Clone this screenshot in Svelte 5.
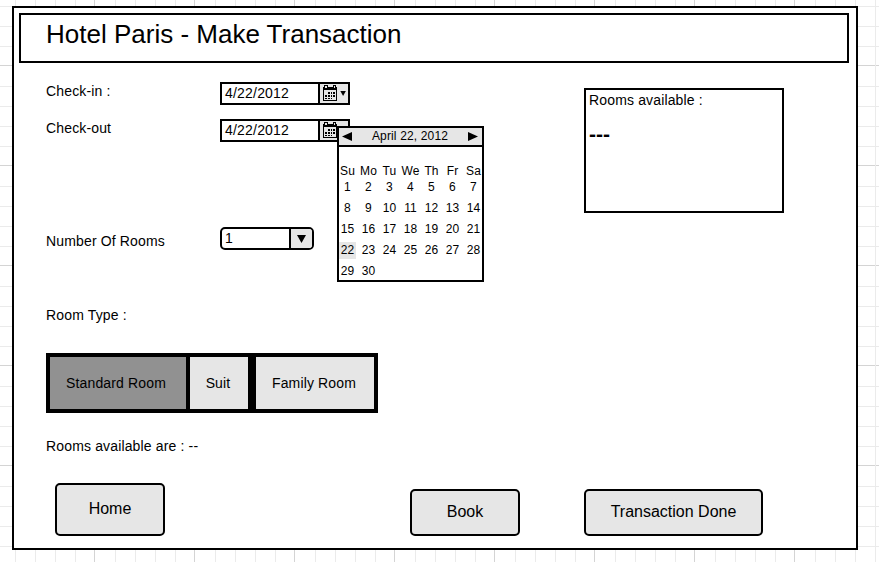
<script>
  const weekdays = ['Su', 'Mo', 'Tu', 'We', 'Th', 'Fr', 'Sa'];
  const days = Array.from({ length: 30 }, (_, i) => i + 1);
  const selectedDay = 22;
</script>

{#snippet dateField()}
  <div class="date">
    <span class="value">4/22/2012</span>
    <span class="picker">
      <svg width="28" height="19" viewBox="0 0 28 19" shape-rendering="crispEdges">
        <path d="M3 3h14v14H3z" fill="#000" />
        <path d="M4 6h12v10H4z" fill="#e6e6e6" />
        <path d="M4 1h4v4H4zM13 1h3v4h-3z" fill="#000" />
        <path d="M5 2h2v2H5zM14 2h1v2h-1z" fill="#e6e6e6" />
        <path d="M8 8h2v2H8zM11 8h1v2h-1zM13 8h2v2h-2zM5 11h2v2H5zM8 11h2v2H8zM11 11h1v2h-1zM13 11h2v2h-2zM5 14h2v1H5zM8 14h2v1H8zM11 14h1v1h-1z" fill="#000" />
        <path d="M20.3 7h5.6l-2.8 5z" fill="#000" shape-rendering="auto" />
      </svg>
    </span>
  </div>
{/snippet}

<main class="canvas">
  <div class="frame">
    <header><h1>Hotel Paris - Make Transaction</h1></header>
    <div class="content">
      <div class="form">
        <div class="row in"><span class="label">Check-in :</span>{@render dateField()}</div>
        <div class="row out">
          <span class="label">Check-out</span>
          <div class="anchor">
            {@render dateField()}
            <div class="calendar">
              <div class="month">
                <svg width="10" height="9"><path d="M10 0v9L0 4.5z" /></svg>
                <span>April 22, 2012</span>
                <svg width="10" height="9"><path d="M0 0v9l10-4.5z" /></svg>
              </div>
              <div class="week">
                {#each weekdays as w}<span>{w}</span>{/each}
              </div>
              <div class="days">
                {#each days as d}<span class:selected={d === selectedDay}>{d}</span>{/each}
              </div>
            </div>
          </div>
        </div>
        <div class="row number">
          <span class="label">Number Of Rooms</span>
          <div class="select">
            <span class="value">1</span>
            <span class="arrow"><svg width="9" height="8"><path d="M0 0h9L4.5 8z" /></svg></span>
          </div>
        </div>
        <p class="type">Room Type :</p>
        <div class="segments">
          <button class="std">Standard Room</button>
          <button class="suit">Suit</button>
          <button class="family">Family Room</button>
        </div>
        <p class="count">Rooms available are : --</p>
      </div>
      <aside>
        <p>Rooms available :</p>
        <strong>---</strong>
      </aside>
    </div>
    <footer>
      <button class="home">Home</button>
      <button class="book">Book</button>
      <button class="done">Transaction Done</button>
    </footer>
  </div>
</main>

<style>
  :global(body) { background: #fff; }
  * { box-sizing: border-box; }
  .canvas {
    --grid: #d4d4d4 0 1px, transparent 1px 21px, #ebebeb 21px 22px, transparent 22px 41px,
      #ebebeb 41px 42px, transparent 42px 61px, #ebebeb 61px 62px, transparent 62px 81px,
      #ebebeb 81px 82px, transparent 82px;
    width: 879px;
    height: 562px;
    padding: 6px 0 0 12px;
    overflow: hidden;
    font: 14px/16px "Liberation Sans", Arial, sans-serif;
    letter-spacing: .15px;
    color: #000;
    background-color: #fff;
    background-image: linear-gradient(90deg, var(--grid)), linear-gradient(var(--grid));
    background-size: 100px 100px;
    background-position: -6px 0, 0 -35px;
  }
  .frame {
    width: 846px;
    height: 544px;
    border: 2px solid #000;
    background: #fff;
    padding: 5px 7px 0 5px;
  }
  header {
    height: 50px;
    border: 2px solid #000;
    padding: 4px 0 0 25px;
  }
  h1 {
    margin: 0;
    font-size: 26px;
    line-height: 30px;
    font-weight: 400;
    letter-spacing: 0;
    white-space: nowrap;
  }
  p { margin: 0; }
  .content { display: flex; justify-content: space-between; padding: 19px 65px 0 27px; }
  .form { width: 440px; }
  .row { display: flex; height: 23px; }
  .label { width: 174px; padding-top: 1px; }
  .row.out { margin-top: 14px; }
  .row.number { margin-top: 85px; }
  .number .label { padding-top: 6px; }
  .anchor { position: relative; }
  .date { display: flex; width: 130px; height: 23px; border: 2px solid #000; }
  .date .value { width: 96px; padding: 1px 0 0 3px; letter-spacing: .2px; }
  .picker { width: 30px; border-left: 2px solid #000; background: #e6e6e6; }
  svg { display: block; }
  .calendar {
    position: absolute;
    left: 117px;
    top: 7px;
    width: 147px;
    height: 156px;
    border: 2px solid #000;
    background: #fff;
    font-size: 12px;
    line-height: 17px;
    letter-spacing: .1px;
  }
  .month {
    display: flex;
    justify-content: space-between;
    align-items: center;
    height: 19px;
    padding: 0 4px 0 3px;
    border-bottom: 2px solid #000;
    background: #e6e6e6;
    letter-spacing: .15px;
  }
  .week, .days { display: grid; grid-template-columns: repeat(7, 21px); width: 147px; text-align: center; }
  .week { margin-top: 16px; height: 16px; }
  .week span, .days span { width: 17px; display: flex; justify-content: center; }
  .days { row-gap: 4px; }
  .selected { background: #e6e6e6; }
  .select {
    display: flex;
    width: 94px;
    height: 23px;
    border: 2px solid #000;
    border-radius: 5px;
    overflow: hidden;
  }
  .select .value { width: 67px; padding: 1px 0 0 3px; }
  .arrow {
    flex: 1;
    display: flex;
    align-items: center;
    justify-content: center;
    border-left: 2px solid #000;
    background: #e6e6e6;
  }
  .type { margin-top: 57px; }
  .segments { display: flex; width: 332px; height: 60px; margin-top: 30px; padding: 4px; background: #000; }
  button { font: inherit; letter-spacing: inherit; color: #000; background: #e6e6e6; border: 0; padding: 0; }
  .std { width: 136px; margin-right: 4px; padding-right: 4px; background: #919191; }
  .suit { width: 58px; margin-right: 8px; padding-right: 2px; }
  .family { width: 118px; padding-right: 2px; }
  .count { margin-top: 25px; }
  aside { width: 200px; height: 125px; margin-top: 6px; border: 2px solid #000; padding: 2px 3px; }
  aside strong { display: block; margin-top: 14px; font-size: 21px; line-height: 24px; letter-spacing: 0; }
  footer { display: flex; align-items: flex-end; margin: 29px 0 0 36px; }
  footer button {
    height: 47px;
    padding-bottom: 2px;
    border: 2px solid #000;
    border-radius: 5px;
    font-size: 16px;
    letter-spacing: 0;
  }
  .home { width: 110px; }
  footer .home { height: 53px; }
  .book { width: 110px; margin-left: 245px; }
  .done { width: 179px; margin-left: 64px; }
</style>
